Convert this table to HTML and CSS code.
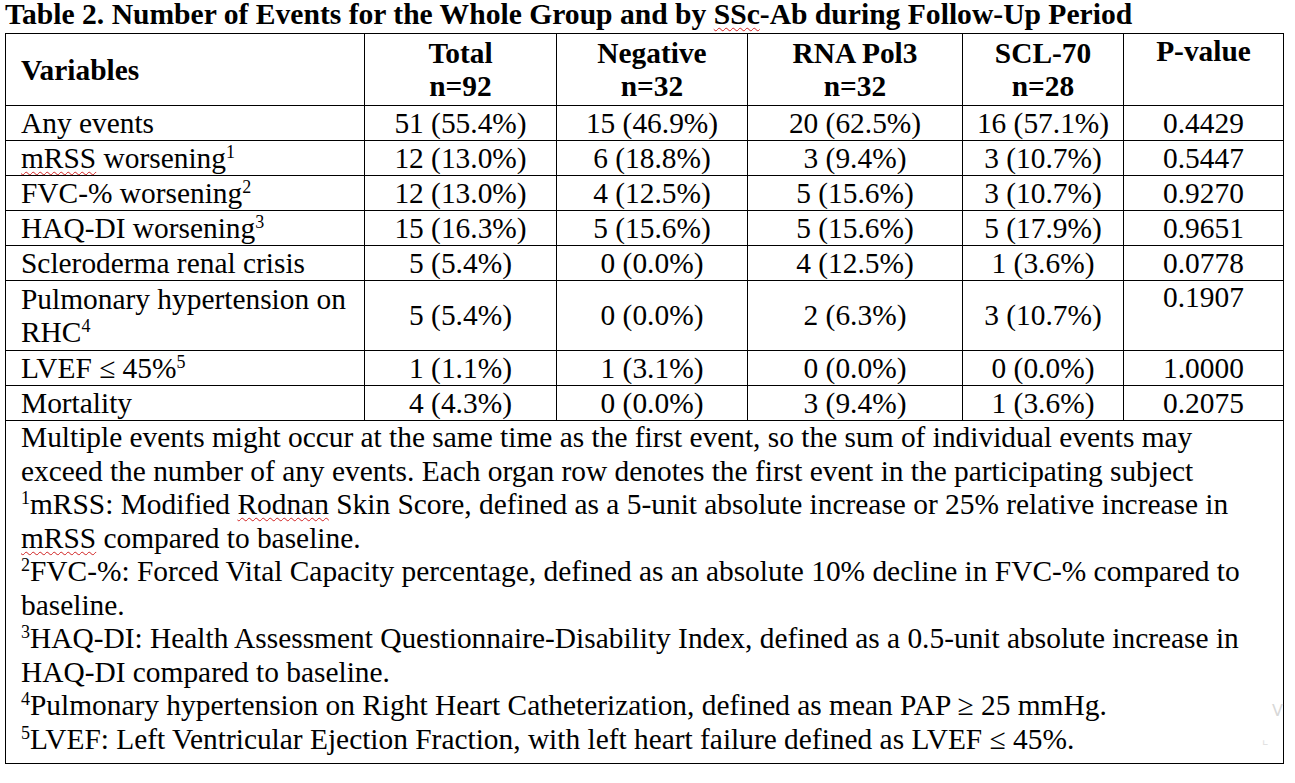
FILE: index.html
```html
<!DOCTYPE html>
<html>
<head>
<meta charset="utf-8">
<link rel="stylesheet" href="styles.css">
</head>
<body>
<div class="page">
  <h1 class="title">Table 2. Number of Events for the Whole Group and by <span class="sp">SSc</span>-Ab during Follow-Up Period</h1>
  <table class="tbl">
    <colgroup>
      <col class="c-var"><col class="c-tot"><col class="c-neg"><col class="c-rna"><col class="c-scl"><col class="c-p">
    </colgroup>
    <thead>
      <tr class="head">
        <th class="lbl">Variables</th>
        <th>Total<br>n=92</th>
        <th>Negative<br>n=32</th>
        <th>RNA Pol3<br>n=32</th>
        <th>SCL-70<br>n=28</th>
        <th class="top">P-value</th>
      </tr>
    </thead>
    <tbody>
      <tr><td class="lbl">Any events</td><td>51 (55.4%)</td><td>15 (46.9%)</td><td>20 (62.5%)</td><td>16 (57.1%)</td><td>0.4429</td></tr>
      <tr><td class="lbl"><span class="sp">mRSS</span> worsening<sup>1</sup></td><td>12 (13.0%)</td><td>6 (18.8%)</td><td>3 (9.4%)</td><td>3 (10.7%)</td><td>0.5447</td></tr>
      <tr><td class="lbl">FVC-% worsening<sup>2</sup></td><td>12 (13.0%)</td><td>4 (12.5%)</td><td>5 (15.6%)</td><td>3 (10.7%)</td><td>0.9270</td></tr>
      <tr><td class="lbl">HAQ-DI worsening<sup>3</sup></td><td>15 (16.3%)</td><td>5 (15.6%)</td><td>5 (15.6%)</td><td>5 (17.9%)</td><td>0.9651</td></tr>
      <tr><td class="lbl">Scleroderma renal crisis</td><td>5 (5.4%)</td><td>0 (0.0%)</td><td>4 (12.5%)</td><td>1 (3.6%)</td><td>0.0778</td></tr>
      <tr class="tall"><td class="lbl">Pulmonary hypertension on<br>RHC<sup>4</sup></td><td>5 (5.4%)</td><td>0 (0.0%)</td><td>2 (6.3%)</td><td>3 (10.7%)</td><td class="top">0.1907</td></tr>
      <tr><td class="lbl">LVEF ≤ 45%<sup>5</sup></td><td>1 (1.1%)</td><td>1 (3.1%)</td><td>0 (0.0%)</td><td>0 (0.0%)</td><td>1.0000</td></tr>
      <tr><td class="lbl">Mortality</td><td>4 (4.3%)</td><td>0 (0.0%)</td><td>3 (9.4%)</td><td>1 (3.6%)</td><td>0.2075</td></tr>
      <tr>
        <td class="notes" colspan="6">
          <div class="note">Multiple events might occur at the same time as the first event, so the sum of individual events may</div>
          <div class="note">exceed the number of any events. Each organ row denotes the first event in the participating subject</div>
          <div class="note"><sup>1</sup>mRSS: Modified <span class="sp">Rodnan</span> Skin Score, defined as a 5-unit absolute increase or 25% relative increase in</div>
          <div class="note"><span class="sp">mRSS</span> compared to baseline.</div>
          <div class="note"><sup>2</sup>FVC-%: Forced Vital Capacity percentage, defined as an absolute 10% decline in FVC-% compared to</div>
          <div class="note">baseline.</div>
          <div class="note"><sup>3</sup>HAQ-DI: Health Assessment Questionnaire-Disability Index, defined as a 0.5-unit absolute increase in</div>
          <div class="note">HAQ-DI compared to baseline.</div>
          <div class="note"><sup>4</sup>Pulmonary hypertension on Right Heart Catheterization, defined as mean PAP ≥ 25 mmHg.</div>
          <div class="note"><sup>5</sup>LVEF: Left Ventricular Ejection Fraction, with left heart failure defined as LVEF ≤ 45%.</div>
        </td>
      </tr>
    </tbody>
  </table>
  <span class="ghost-v">V</span>
  <span class="ghost-b">⌞</span>
</div>
</body>
</html>
```
FILE: styles.css
```css
html, body {
  margin: 0;
  padding: 0;
  background: #ffffff;
}
body {
  font-family: "Liberation Serif", "Times New Roman", serif;
  color: #000;
}
.page {
  position: relative;
  padding: 0 0 0 5px;
}
.title {
  margin: 0;
  font-size: 29.6px;
  line-height: 28px;
  font-weight: bold;
  height: 33px;
  white-space: nowrap;
}
.sp {
  text-decoration: underline wavy #d02020;
  text-decoration-thickness: 1px;
  text-underline-offset: 3px;
}
.tbl {
  border-collapse: collapse;
  table-layout: fixed;
  width: 1278px;
  font-size: 29.4px;
}
.c-var { width: 359px; }
.c-tot { width: 192px; }
.c-neg { width: 191px; }
.c-rna { width: 215px; }
.c-scl { width: 161px; }
.c-p { width: 160px; }
.tbl th, .tbl td {
  border: 1px solid #000;
  padding: 0;
  text-align: center;
  vertical-align: middle;
  line-height: 33px;
  white-space: nowrap;
}
.tbl th {
  font-weight: bold;
}
.head th {
  height: 70px;
  padding-top: 1px;
}
.tbl tbody tr {
  height: 35px;
}
.tbl tbody tr.tall {
  height: 70px;
}
.tbl .lbl {
  text-align: left;
  padding-left: 15px;
}
.tbl .top {
  vertical-align: top;
}
sup {
  font-size: 18px;
  line-height: 0;
  vertical-align: 10px;
}
.tbl td.notes {
  text-align: left;
  padding: 0 0 7px 15px;
  vertical-align: top;
}
.note {
  line-height: 33.5px;
  white-space: nowrap;
}
.ghost-v {
  position: absolute;
  left: 1272px;
  top: 702px;
  font-family: "DejaVu Sans", sans-serif;
  font-size: 16px;
  line-height: 18px;
  color: #d8d8d8;
}
.ghost-b {
  position: absolute;
  left: 1262px;
  top: 730px;
  font-family: "DejaVu Sans", sans-serif;
  font-size: 14px;
  line-height: 18px;
  color: #e2e2e2;
}
```
